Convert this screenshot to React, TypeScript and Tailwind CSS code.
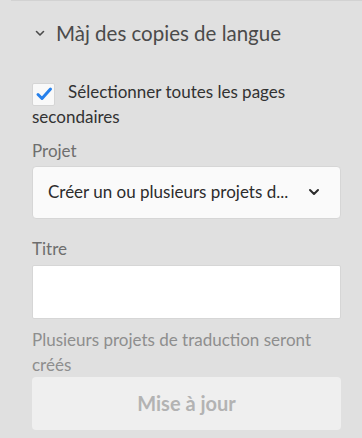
import React, { useState } from 'react';

export default function App() {
  const [checked, setChecked] = useState(true);

  return (
    <div
      className="w-[362px] h-[438px] bg-[#e0e0e0] overflow-hidden"
      style={{ fontFamily: 'Lato, "Open Sans", sans-serif' }}
    >
      <div className="ml-[11px] h-px bg-[#d2d2d2]" />
      {/* Section header */}
      <div className="flex items-center pl-[35px] pt-[20px] h-[44px] text-[#4b4b4b]">
        <svg width="10" height="10" viewBox="0 0 10 10" className="mr-[11px]">
          <path d="M1.5 3.5 L5 7 L8.5 3.5" fill="none" stroke="#4b4b4b" strokeWidth="1.6" strokeLinecap="round" strokeLinejoin="round" />
        </svg>
        <span className="text-[20.5px] leading-none">Màj des copies de langue</span>
      </div>

      <div className="pl-[32px] pt-[36px] pr-[21px]">
        {/* Checkbox */}
        <label className="block text-[17px] leading-[22px] text-[#323232] cursor-pointer">
          <span
            onClick={() => setChecked(!checked)}
            className="inline-flex align-[-5px] w-[23px] h-[23px] mr-[13px] items-center justify-center bg-[#f9f9f9] border border-[#d5d5d5] rounded-[2px]"
          >
            {checked && (
              <svg width="18" height="18" viewBox="0 0 18 18">
                <path d="M3 9.5 L7 13.5 L15.5 4" fill="none" stroke="#2680eb" strokeWidth="3" strokeLinecap="round" strokeLinejoin="round" />
              </svg>
            )}
          </span>
          Sélectionner toutes les pages secondaires
        </label>

        {/* Projet */}
        <div className="mt-[11px] text-[17px] leading-[24px] text-[#6e6e6e]">Projet</div>
        <div className="mt-[3px] h-[53px] flex items-center justify-between bg-[#fafafa] border border-[#d6d6d6] rounded-[4px] pl-[15px] pr-[20px]">
          <span className="text-[17px] text-[#2c2c2c]">Créer un ou plusieurs projets d...</span>
          <svg width="12" height="12" viewBox="0 0 12 12">
            <path d="M2 4 L6 8 L10 4" fill="none" stroke="#2c2c2c" strokeWidth="2" strokeLinecap="round" strokeLinejoin="round" />
          </svg>
        </div>

        {/* Titre */}
        <div className="mt-[18px] text-[17px] leading-[24px] text-[#6e6e6e]">Titre</div>
        <input
          type="text"
          className="mt-[4px] block w-full h-[54px] bg-white border border-[#d6d6d6] rounded-[2px] outline-none px-3"
        />
        <div className="mt-[8px] text-[17px] leading-[25px] text-[#8e8e8e]">
          Plusieurs projets de traduction seront créés
        </div>

        {/* Button */}
        <button
          disabled
          className="mt-0 w-full h-[53px] bg-[#efefef] rounded-[4px] text-[20px] font-bold text-[#b3b3b3]"
        >
          Mise à jour
        </button>
      </div>
    </div>
  );
}
